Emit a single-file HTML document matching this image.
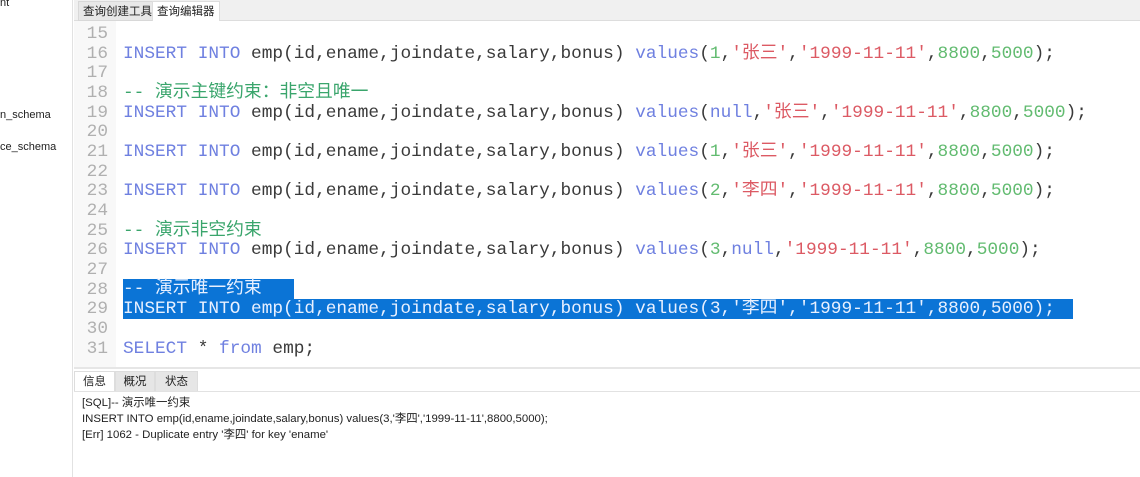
<!DOCTYPE html>
<html><head><meta charset="utf-8"><style>
*{margin:0;padding:0;box-sizing:border-box}
body{width:1140px;height:477px;overflow:hidden;background:#fff;position:relative;font-family:"Liberation Sans","Noto Sans CJK SC",sans-serif}
.side{position:absolute;left:0;top:0;width:73px;height:477px;background:#fff;border-right:1px solid #e2e2e2;font-size:11px;color:#222}
.side div{position:absolute;white-space:nowrap}
.tabbar{position:absolute;left:74px;top:0;right:0;height:21px;background:#f0f0f0;border-bottom:1px solid #ddd}
.tab{position:absolute;top:1px;height:20px;font-size:11.5px;line-height:20px;padding:0 4px;color:#222}
.gutter{position:absolute;left:74px;top:21px;width:42px;height:346px;background:#f8f8f8}
.ln{position:absolute;left:74px;width:34px;text-align:right;color:#b0b0b0;font-family:"Liberation Mono",monospace;font-size:17.8px;line-height:20px}
.l{position:absolute;left:123px;line-height:20px;font-family:"Liberation Mono","Noto Sans CJK SC",monospace;font-size:17.8px;white-space:pre;color:#3a3a3a}
.k{color:#6f80e0}.s{color:#dc5a64}.n{color:#62bb70}.c{color:#3aa56c}
.sel{background:#0b74d6;color:#e8f0ff}
.bp{position:absolute;left:74px;top:367px;right:0;bottom:0;background:#fff;border-top:2px solid #e6e6e6}
.bt{position:absolute;top:2px;height:21px;font-size:11.5px;line-height:21px;text-align:center;color:#222;background:#e6e6e6;border:1px solid #ddd}
.msg{position:absolute;left:82px;font-size:11.4px;color:#222;white-space:pre;line-height:16px}
</style></head><body>
<div class="side">
<div style="left:0;top:-3px">nt</div>
<div style="left:0;top:109px">n_schema</div>
<div style="left:0;top:141px">ce_schema</div>
</div>
<div class="tabbar">
<div class="tab" style="left:4px;background:#e8e8e8;border:1px solid #d8d8d8">查询创建工具</div>
<div class="tab" style="left:78px;background:#fff;border:1px solid #ddd;border-bottom:none">查询编辑器</div>
</div>
<div class="gutter"></div>
<div class="ln" style="top:24px">15</div>
<div class="ln" style="top:44px">16</div>
<div class="ln" style="top:63px">17</div>
<div class="ln" style="top:83px">18</div>
<div class="ln" style="top:103px">19</div>
<div class="ln" style="top:122px">20</div>
<div class="ln" style="top:142px">21</div>
<div class="ln" style="top:162px">22</div>
<div class="ln" style="top:181px">23</div>
<div class="ln" style="top:201px">24</div>
<div class="ln" style="top:221px">25</div>
<div class="ln" style="top:240px">26</div>
<div class="ln" style="top:260px">27</div>
<div class="ln" style="top:280px">28</div>
<div class="ln" style="top:299px">29</div>
<div class="ln" style="top:319px">30</div>
<div class="ln" style="top:339px">31</div>

<div class="l" style="top:44px"><span class="k">INSERT INTO</span> emp(id,ename,joindate,salary,bonus) <span class="k">values</span>(<span class="n">1</span>,<span class="s">'张三'</span>,<span class="s">'1999-11-11'</span>,<span class="n">8800</span>,<span class="n">5000</span>);</div>
<div class="l c" style="top:83px">-- 演示主键约束：非空且唯一</div>
<div class="l" style="top:103px"><span class="k">INSERT INTO</span> emp(id,ename,joindate,salary,bonus) <span class="k">values</span>(<span class="k">null</span>,<span class="s">'张三'</span>,<span class="s">'1999-11-11'</span>,<span class="n">8800</span>,<span class="n">5000</span>);</div>
<div class="l" style="top:142px"><span class="k">INSERT INTO</span> emp(id,ename,joindate,salary,bonus) <span class="k">values</span>(<span class="n">1</span>,<span class="s">'张三'</span>,<span class="s">'1999-11-11'</span>,<span class="n">8800</span>,<span class="n">5000</span>);</div>
<div class="l" style="top:181px"><span class="k">INSERT INTO</span> emp(id,ename,joindate,salary,bonus) <span class="k">values</span>(<span class="n">2</span>,<span class="s">'李四'</span>,<span class="s">'1999-11-11'</span>,<span class="n">8800</span>,<span class="n">5000</span>);</div>
<div class="l c" style="top:221px">-- 演示非空约束</div>
<div class="l" style="top:240px"><span class="k">INSERT INTO</span> emp(id,ename,joindate,salary,bonus) <span class="k">values</span>(<span class="n">3</span>,<span class="k">null</span>,<span class="s">'1999-11-11'</span>,<span class="n">8800</span>,<span class="n">5000</span>);</div>
<div class="l sel" style="top:279px;height:20px;width:171px">-- 演示唯一约束 </div>
<div class="l sel" style="top:299px;height:20px;width:950px">INSERT INTO emp(id,ename,joindate,salary,bonus) values(3,'李四','1999-11-11',8800,5000);</div>
<div class="l" style="top:339px"><span class="k">SELECT</span> * <span class="k">from</span> emp;</div>

<div class="bp">
<div class="bt" style="left:0;width:41px;background:#fff;border-bottom:none">信息</div>
<div class="bt" style="left:41px;width:40px">概况</div>
<div class="bt" style="left:81px;width:43px">状态</div>
<div style="position:absolute;left:0;right:0;top:22px;border-top:1px solid #e2e2e2"></div>
</div>
<div class="msg" style="top:395px">[SQL]-- 演示唯一约束</div>
<div class="msg" style="top:411px">INSERT INTO emp(id,ename,joindate,salary,bonus) values(3,'李四','1999-11-11',8800,5000);</div>
<div class="msg" style="top:427px">[Err] 1062 - Duplicate entry '李四' for key 'ename'</div>
</body></html>
